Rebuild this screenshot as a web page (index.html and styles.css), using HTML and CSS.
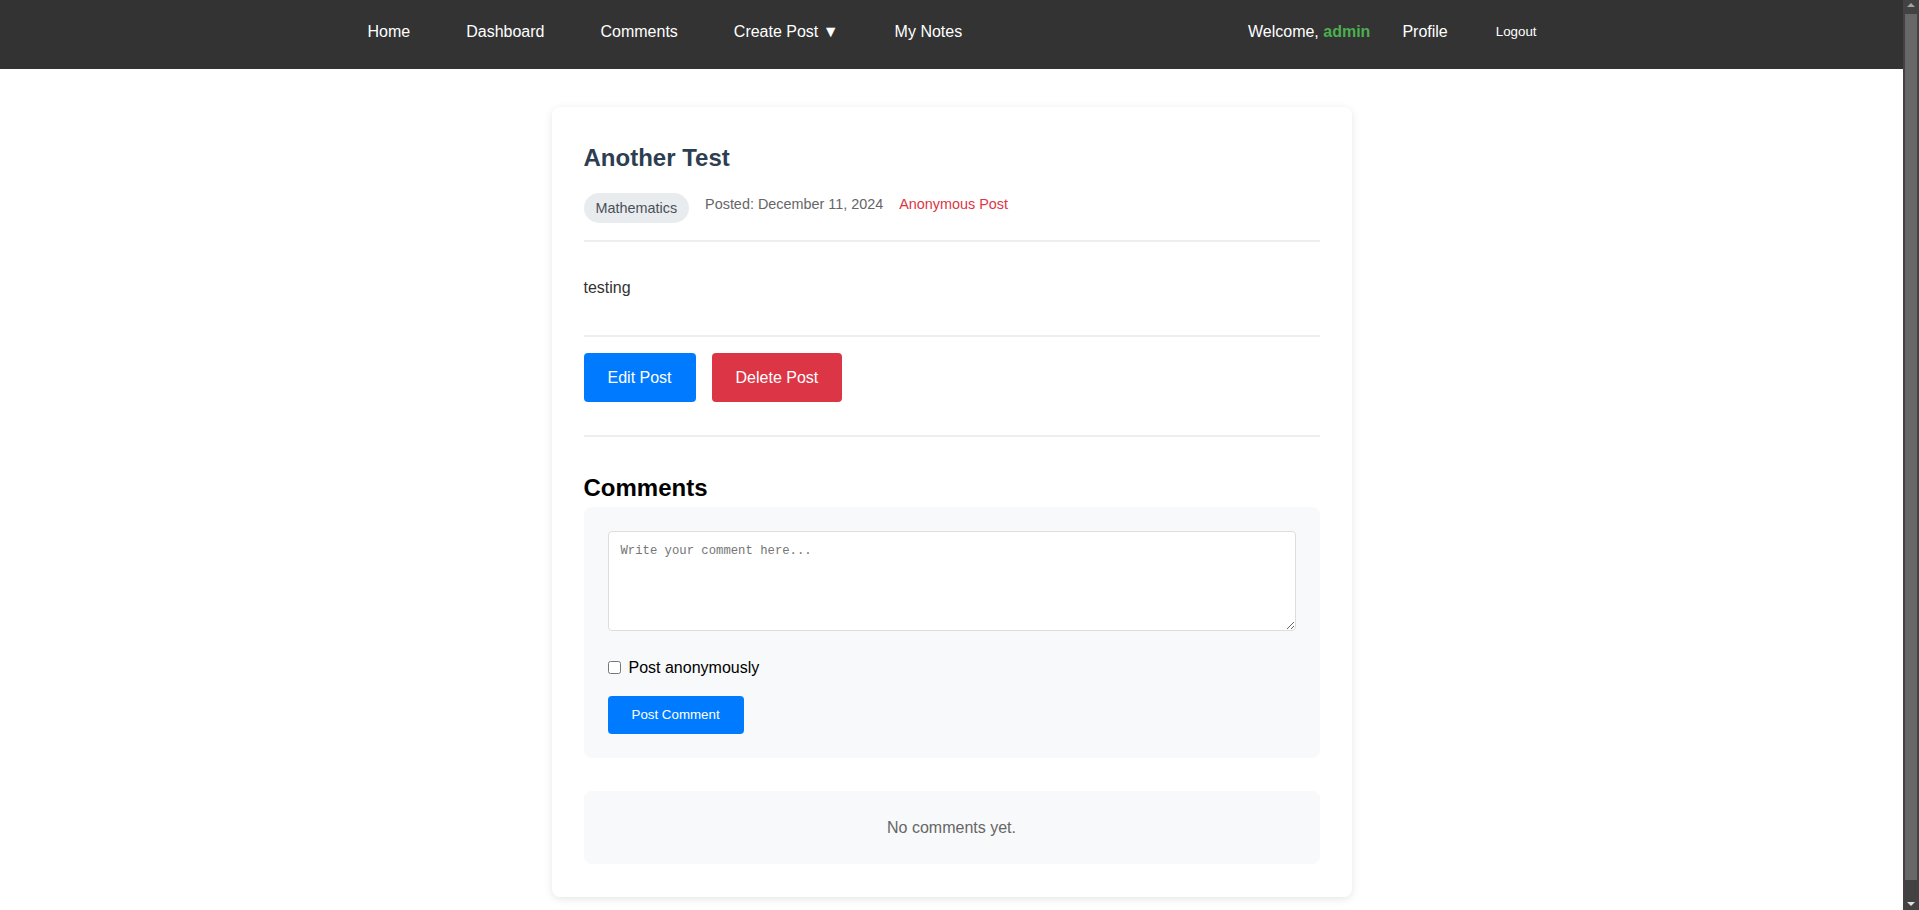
FILE: index.html
```html
<!DOCTYPE html>
<html lang="en">
<head>
<meta charset="utf-8">
<title>Another Test</title>
<link rel="stylesheet" href="styles.css">
</head>
<body>
<nav class="navbar">
  <div class="nav-inner">
    <div class="nav-left">
      <a class="nav-link" href="#">Home</a>
      <a class="nav-link" href="#">Dashboard</a>
      <a class="nav-link" href="#">Comments</a>
      <a class="nav-link" href="#">Create Post <span class="caret">▼</span></a>
      <a class="nav-link" href="#">My Notes</a>
    </div>
    <div class="nav-right">
      <span class="welcome">Welcome, <strong class="username">admin</strong></span>
      <a class="nav-link" href="#">Profile</a>
      <button class="logout-btn" type="button">Logout</button>
    </div>
  </div>
</nav>

<main class="post-card">
  <header class="post-header">
    <h1 class="post-title">Another Test</h1>
    <div class="post-meta">
      <span class="tag">Mathematics</span>
      <span class="post-date">Posted: December 11, 2024</span>
      <span class="anon">Anonymous Post</span>
    </div>
  </header>

  <div class="post-content">testing</div>

  <div class="post-actions">
    <button class="btn btn-primary" type="button">Edit Post</button>
    <button class="btn btn-danger" type="button">Delete Post</button>
  </div>

  <section class="comments">
    <h2 class="comments-title">Comments</h2>
    <form class="comment-form">
      <textarea class="comment-input" placeholder="Write your comment here..."></textarea>
      <label class="anon-check"><input type="checkbox" class="checkbox"> Post anonymously</label>
      <button class="btn-small" type="button">Post Comment</button>
    </form>
    <div class="no-comments">No comments yet.</div>
  </section>
</main>

<div class="scrollbar" aria-hidden="true">
  <div class="sb-arrow sb-up"></div>
  <div class="sb-track"><div class="sb-thumb"></div></div>
  <div class="sb-arrow sb-down"></div>
</div>
</body>
</html>
```

FILE: styles.css
```css
* {
  box-sizing: border-box;
}

body {
  margin: 0;
  padding-right: 16px;
  font-family: "Liberation Sans", Arial, sans-serif;
  background: #ffffff;
  color: #333333;
}

.navbar {
  background: #333333;
  height: 69px;
  padding-bottom: 6px;
}

.nav-inner {
  max-width: 1170px;
  height: 100%;
  margin: 0 auto;
  display: flex;
  align-items: center;
  justify-content: space-between;
}

.nav-left {
  display: flex;
  align-items: center;
  gap: 56px;
  padding-left: 1px;
}

.nav-right {
  display: flex;
  align-items: center;
  gap: 32px;
}

.nav-link {
  color: #ffffff;
  text-decoration: none;
  font-size: 16px;
}

.caret {
  font-size: 16px;
}

.welcome {
  color: #ffffff;
  font-size: 16px;
}

.username {
  color: #4caf50;
}

.logout-btn {
  margin-left: 16px;
  background: none;
  border: none;
  padding: 0;
  color: #ffffff;
  font-family: "Liberation Sans", Arial, sans-serif;
  font-size: 13.333px;
  cursor: pointer;
}

.post-card {
  max-width: 800px;
  margin: 38px auto 32px;
  padding: 32px 32px 33px;
  background: #ffffff;
  border-radius: 8px;
  box-shadow: 0 2px 8px rgba(0, 0, 0, 0.1);
}

.post-header {
  border-bottom: 2px solid #eeeeee;
  padding-bottom: 17px;
}

.post-title {
  margin: 5px 0 20px;
  font-size: 24px;
  line-height: 28.8px;
  color: #2c3e50;
}

.post-meta {
  display: flex;
  align-items: flex-start;
  gap: 16px;
  font-size: 14.4px;
}

.tag {
  background: #e9ecef;
  color: #495057;
  padding: 6px 12px;
  border-radius: 15px;
  line-height: 18px;
}

.post-date {
  color: #666666;
  line-height: 22px;
}

.anon {
  color: #dc3545;
  line-height: 22px;
}

.post-content {
  padding: 33px 0 35px;
  font-size: 16px;
  line-height: 25.6px;
  border-bottom: 2px solid #eeeeee;
}

.post-actions {
  display: flex;
  gap: 16px;
  padding: 16px 0 33px;
  border-bottom: 2px solid #eeeeee;
}

.btn {
  border: none;
  border-radius: 4px;
  color: #ffffff;
  font-family: "Liberation Sans", Arial, sans-serif;
  font-size: 16px;
  line-height: 25px;
  padding: 12px 24px;
  cursor: pointer;
}

.btn-primary {
  background: #007bff;
}

.btn-danger {
  background: #dc3545;
}

.comments-title {
  margin: 37px 0 4px;
  font-size: 24px;
  line-height: 28.8px;
  color: #000000;
}

.comment-form {
  background: #f8f9fa;
  border-radius: 8px;
  padding: 24px;
}

.comment-input {
  display: block;
  width: 100%;
  height: 100px;
  padding: 12px;
  border: 1px solid #dddddd;
  border-radius: 4px;
  font-family: "Liberation Mono", "Courier New", monospace;
  font-size: 12.25px;
  background: #ffffff;
  margin: 0 0 24px;
}

.comment-input::placeholder {
  color: #757575;
}

.anon-check {
  display: flex;
  align-items: center;
  font-size: 16px;
  line-height: 25.6px;
  color: #000000;
  margin-bottom: 15px;
}

.checkbox {
  margin: 0 8px 0 0;
  width: 13px;
  height: 13px;
}

.btn-small {
  display: block;
  background: #007bff;
  color: #ffffff;
  border: none;
  border-radius: 4px;
  padding: 11px 24px;
  font-family: "Liberation Sans", Arial, sans-serif;
  font-size: 13.333px;
  line-height: 16px;
  cursor: pointer;
}

.no-comments {
  margin-top: 33px;
  background: #f8f9fa;
  border-radius: 8px;
  padding: 24px;
  line-height: 25.6px;
  text-align: center;
  color: #666666;
  font-size: 16px;
}

.scrollbar {
  position: fixed;
  top: 0;
  right: 0;
  width: 16px;
  height: 100vh;
  background: #424242;
  display: flex;
  flex-direction: column;
}

.sb-arrow {
  height: 14px;
  flex: none;
  position: relative;
}

.sb-arrow::after {
  content: "";
  position: absolute;
  left: 4px;
  border-left: 4px solid transparent;
  border-right: 4px solid transparent;
}

.sb-up::after {
  top: 3px;
  border-bottom: 4px solid #a3a3a3;
}

.sb-down::after {
  top: 6px;
  border-top: 4px solid #e0e0e0;
}

.sb-track {
  flex: 1;
  padding: 0 2px 16px;
}

.sb-thumb {
  height: 100%;
  background: #686868;
}
```
